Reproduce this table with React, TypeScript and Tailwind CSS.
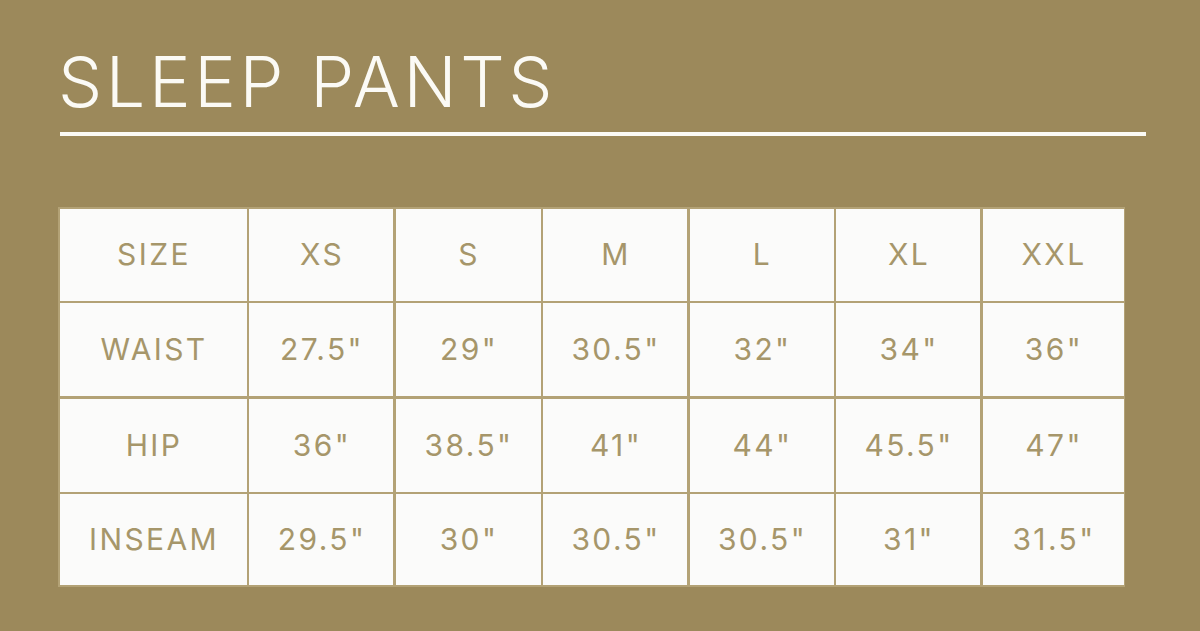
import React from 'react';

const rows: string[][] = [
  ['SIZE', 'XS', 'S', 'M', 'L', 'XL', 'XXL'],
  ['WAIST', '27.5"', '29"', '30.5"', '32"', '34"', '36"'],
  ['HIP', '36"', '38.5"', '41"', '44"', '45.5"', '47"'],
  ['INSEAM', '29.5"', '30"', '30.5"', '30.5"', '31"', '31.5"'],
];

const App: React.FC = () => {
  return (
    <div className="w-[1200px] h-[631px] bg-[#9c895b] overflow-hidden" style={{ fontFamily: 'Inter, "Noto Sans", sans-serif' }}>
      <div className="pl-[58px] pr-[54px] pt-[47px]">
        <h1 className="text-[70px] leading-[70px] font-light text-[#fbfaf5] tracking-[3.6px]">SLEEP PANTS</h1>
        <div className="mt-[15px] h-[4px] bg-[#fbfaf5] ml-[2px]" />
      </div>
      <div className="ml-[58px] mt-[71px] w-[1067px] grid grid-cols-[187px_144px_145px_144px_144px_144px_141px] grid-rows-[92px_93px_93px_91px] gap-[2.5px] p-[1.5px] bg-[#b3a276]">
        {rows.map((r, i) =>
          r.map((c, j) => (
            <div key={`${i}-${j}`} className="bg-[#fbfbfa] flex items-center justify-center text-[30px] text-[#a6966a] font-normal tracking-[2.4px] pl-[2px]">
              {c}
            </div>
          ))
        )}
      </div>
    </div>
  );
};

export default App;
